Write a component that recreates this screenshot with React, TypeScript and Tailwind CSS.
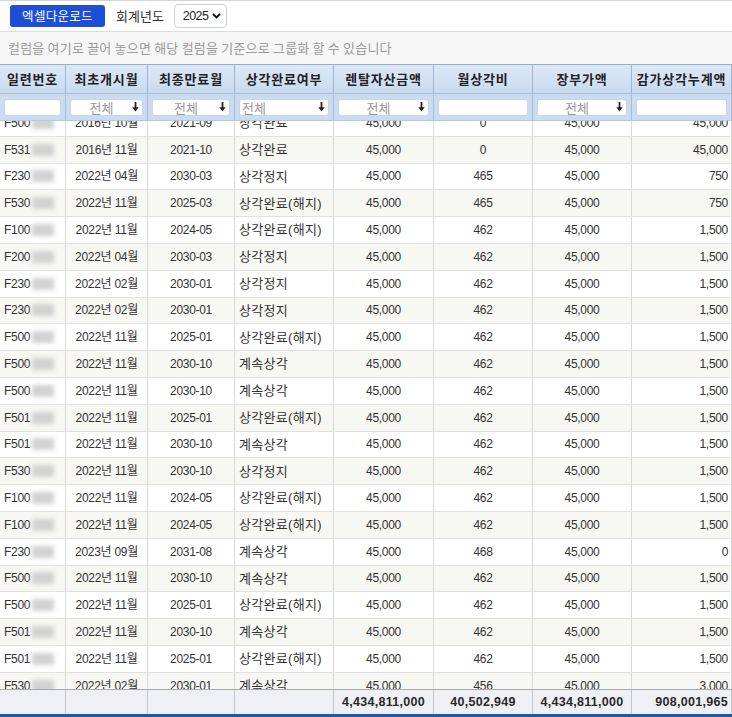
import React from "react";

const cols = [
  { w: "w-[66px]", align: "left" },
  { w: "w-[82px]", align: "center" },
  { w: "w-[87px]", align: "center" },
  { w: "w-[99px]", align: "left" },
  { w: "w-[100px]", align: "center" },
  { w: "w-[99px]", align: "center" },
  { w: "w-[99px]", align: "center" },
  { w: "w-[100px]", align: "right" },
];

const headers = ["일련번호", "최초개시월", "최종만료월", "상각완료여부", "렌탈자산금액", "월상각비", "장부가액", "감가상각누계액"];

type Row = [string, string, string, string, string, string, string, string];

const rows: Row[] = [
  ["F500", "2016년 10월", "2021-09", "상각완료", "45,000", "0", "45,000", "45,000"],
  ["F531", "2016년 11월", "2021-10", "상각완료", "45,000", "0", "45,000", "45,000"],
  ["F230", "2022년 04월", "2030-03", "상각정지", "45,000", "465", "45,000", "750"],
  ["F530", "2022년 11월", "2025-03", "상각완료(해지)", "45,000", "465", "45,000", "750"],
  ["F100", "2022년 11월", "2024-05", "상각완료(해지)", "45,000", "462", "45,000", "1,500"],
  ["F200", "2022년 04월", "2030-03", "상각정지", "45,000", "462", "45,000", "1,500"],
  ["F230", "2022년 02월", "2030-01", "상각정지", "45,000", "462", "45,000", "1,500"],
  ["F230", "2022년 02월", "2030-01", "상각정지", "45,000", "462", "45,000", "1,500"],
  ["F500", "2022년 11월", "2025-01", "상각완료(해지)", "45,000", "462", "45,000", "1,500"],
  ["F500", "2022년 11월", "2030-10", "계속상각", "45,000", "462", "45,000", "1,500"],
  ["F500", "2022년 11월", "2030-10", "계속상각", "45,000", "462", "45,000", "1,500"],
  ["F501", "2022년 11월", "2025-01", "상각완료(해지)", "45,000", "462", "45,000", "1,500"],
  ["F501", "2022년 11월", "2030-10", "계속상각", "45,000", "462", "45,000", "1,500"],
  ["F530", "2022년 11월", "2030-10", "상각정지", "45,000", "462", "45,000", "1,500"],
  ["F100", "2022년 11월", "2024-05", "상각완료(해지)", "45,000", "462", "45,000", "1,500"],
  ["F100", "2022년 11월", "2024-05", "상각완료(해지)", "45,000", "462", "45,000", "1,500"],
  ["F230", "2023년 09월", "2031-08", "계속상각", "45,000", "468", "45,000", "0"],
  ["F500", "2022년 11월", "2030-10", "계속상각", "45,000", "462", "45,000", "1,500"],
  ["F500", "2022년 11월", "2025-01", "상각완료(해지)", "45,000", "462", "45,000", "1,500"],
  ["F501", "2022년 11월", "2030-10", "계속상각", "45,000", "462", "45,000", "1,500"],
  ["F501", "2022년 11월", "2025-01", "상각완료(해지)", "45,000", "462", "45,000", "1,500"],
  ["F530", "2022년 02월", "2030-01", "계속상각", "45,000", "456", "45,000", "3,000"],
];

const alignCls = (a: string) =>
  a === "left" ? "justify-start pl-[4px]" : a === "right" ? "justify-end pr-[3px]" : "justify-center";

function DownArrow() {
  return (
    <svg width="7" height="10" viewBox="0 0 7 10" className="shrink-0">
      <rect x="2.6" y="0" width="1.8" height="6" fill="#222" />
      <path d="M0.3 5.2 L6.7 5.2 L3.5 9.6 Z" fill="#222" />
    </svg>
  );
}

function FilterBox({ i }: { i: number }) {
  const hasText = i !== 0 && i !== 5 && i !== 7;
  const left = i === 3;
  return (
    <div className="flex h-full items-center px-[4px]">
      <div className="relative flex h-[17px] w-full items-center rounded-[3px] border border-[#c9d6e6] bg-white">
        {hasText && (
          <>
            <span
              className={`flex-1 text-[13px] leading-none text-[#999] ${left ? "pl-[2px] text-left" : "text-center"}`}
              style={{ fontFamily: '"Noto Sans CJK KR", sans-serif' }}
            >
              전체
            </span>
            <span className="pr-[3px]">
              <DownArrow />
            </span>
          </>
        )}
      </div>
    </div>
  );
}

export default function App() {
  const font = { fontFamily: '"Liberation Sans", "Noto Sans CJK KR", sans-serif' };
  const kr = { fontFamily: '"Noto Sans CJK KR", sans-serif' };
  return (
    <div className="h-[717px] w-[732px] overflow-hidden bg-white text-[#333]" style={font}>
      {/* Toolbar */}
      <div className="flex h-[31px] items-center border-t border-[#d4d4d4] pl-[10px]">
        <button className="h-[22px] w-[95px] rounded-[3px] bg-[#1d4ed8] text-[12.5px] tracking-[0.3px] text-white" style={kr}>
          엑셀다운로드
        </button>
        <span className="ml-[11px] text-[13px] text-[#333]" style={kr}>회계년도</span>
        <div className="ml-[10px] flex h-[24px] w-[53px] items-center justify-between rounded-[4px] border border-[#cfcfcf] bg-white pl-[8px] pr-[5px]">
          <span className="text-[12.5px] tracking-[-0.6px] text-[#222]">2025</span>
          <svg width="9" height="6" viewBox="0 0 9 6">
            <path d="M1 1 L4.5 4.5 L8 1" stroke="#111" strokeWidth="1.9" fill="none" />
          </svg>
        </div>
      </div>

      {/* Group panel */}
      <div className="flex h-[33px] items-center border-t border-[#dcdcdc] bg-[#f6f6f6] pl-[8px]">
        <span className="text-[13px] tracking-[0.2px] text-[#9a9a9a]" style={kr}>
          컬럼을 여기로 끌어 놓으면 해당 컬럼을 기준으로 그룹화 할 수 있습니다
        </span>
      </div>

      {/* Header */}
      <div className="flex h-[29px] border-t border-[#8fb0d9] bg-gradient-to-b from-[#dde8f6] to-[#c9daef]">
        {headers.map((h, i) => (
          <div
            key={h}
            className={`${cols[i].w} flex shrink-0 items-center justify-center border-r border-[#9fb5d3] text-[13px] font-bold tracking-[0.8px] text-[#222]`}
            style={kr}
          >
            {h}
          </div>
        ))}
      </div>

      {/* Filter row */}
      <div className="flex h-[27px] border-t border-[#a9bedb] bg-[#cbdcf0]">
        {headers.map((h, i) => (
          <div key={h} className={`${cols[i].w} shrink-0 border-r border-[#a7bcd8]`}>
            <FilterBox i={i} />
          </div>
        ))}
      </div>

      {/* Body */}
      <div className="h-[569px] overflow-hidden border-t border-[#b8c7da]">
        <div className="mt-[-11px]">
          {rows.map((r, ri) => (
            <div
              key={ri}
              className={`flex h-[26.8px] border-b border-[#e2e2e2] ${ri % 2 === 0 ? "bg-white" : "bg-[#f7f7f4]"}`}
            >
              {r.map((c, ci) => (
                <div
                  key={ci}
                  className={`${cols[ci].w} ${alignCls(cols[ci].align)} flex shrink-0 items-center border-r border-[#d9d9d9] text-[#333] ${ci === 3 ? "text-[13px] tracking-[0.3px]" : "text-[12px] tracking-[-0.3px]"}`}
                >
                  {ci === 0 ? (
                    <>
                      <span>{c}</span>
                      <span className="ml-[2px] inline-block h-[12px] w-[22px] bg-[#d2d2d2] blur-[2px]" />
                    </>
                  ) : (
                    c
                  )}
                </div>
              ))}
            </div>
          ))}
        </div>
      </div>

      {/* Footer */}
      <div className="flex h-[25px] border-t border-[#a8a8a8] bg-[#eef0f4]">
        {["", "", "", "", "4,434,811,000", "40,502,949", "4,434,811,000", "908,001,965"].map((c, i) => (
          <div
            key={i}
            className={`${cols[i].w} ${i === 7 ? "justify-end pr-[3px]" : "justify-center"} flex shrink-0 items-center border-r border-[#c4c4c4] text-[12.5px] font-bold tracking-[0.3px] text-[#2a2a2a]`}
          >
            {c}
          </div>
        ))}
      </div>
      <div className="h-[3px] bg-[#1e56b0]" />
    </div>
  );
}
